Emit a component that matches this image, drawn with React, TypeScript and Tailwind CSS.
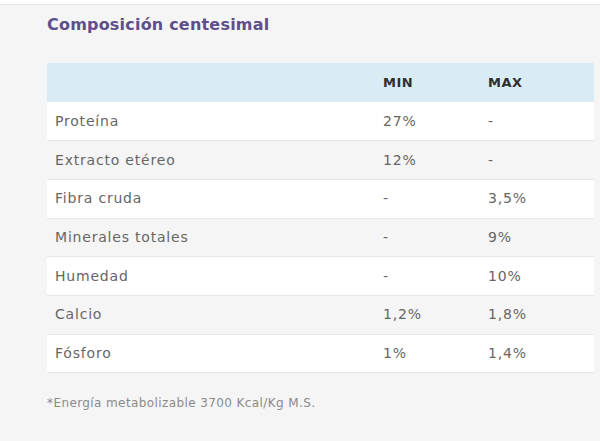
import React from 'react'

const rows: [string, string, string][] = [
  ['Proteína', '27%', '-'],
  ['Extracto etéreo', '12%', '-'],
  ['Fibra cruda', '-', '3,5%'],
  ['Minerales totales', '-', '9%'],
  ['Humedad', '-', '10%'],
  ['Calcio', '1,2%', '1,8%'],
  ['Fósforo', '1%', '1,4%'],
]

export default function App() {
  return (
    <div className="h-[441px] w-[600px] overflow-hidden bg-[#f5f5f5] font-['DejaVu_Sans',sans-serif]">
      <div className="h-[5px] bg-white border-b border-[#e9e9e9]" />
      <div className="pl-[47px] pr-[6px]">
        <h2 className="pt-[9px] text-[16px] leading-[22px] font-bold tracking-[0.2px] text-[#5e4f8c]">
          Composición centesimal
        </h2>

        <table className="mt-[27px] w-full border-collapse text-[14px] tracking-[0.8px]">
          <thead>
            <tr className="h-[39px] bg-[#d9ecf6] text-[13px] font-bold tracking-[0.5px] text-[#2f2f2f]">
              <th className="w-[328px]" />
              <th className="w-[105px] pl-2 text-left">MIN</th>
              <th className="pl-2 text-left">MAX</th>
            </tr>
          </thead>
          <tbody>
            {rows.map(([name, min, max], i) => (
              <tr
                key={name}
                className={
                  'h-[38.7px] border-b border-[#e7e7e7] text-[#666] ' +
                  (i % 2 === 0 ? 'bg-white' : 'bg-[#f5f5f5]')
                }
              >
                <td className="pl-2">{name}</td>
                <td className="pl-2">{min}</td>
                <td className="pl-2">{max}</td>
              </tr>
            ))}
          </tbody>
        </table>

        <p className="mt-[21px] text-[12px] tracking-[0.4px] text-[#8a8a8a]">
          *Energía metabolizable 3700 Kcal/Kg M.S.
        </p>
      </div>
    </div>
  )
}
